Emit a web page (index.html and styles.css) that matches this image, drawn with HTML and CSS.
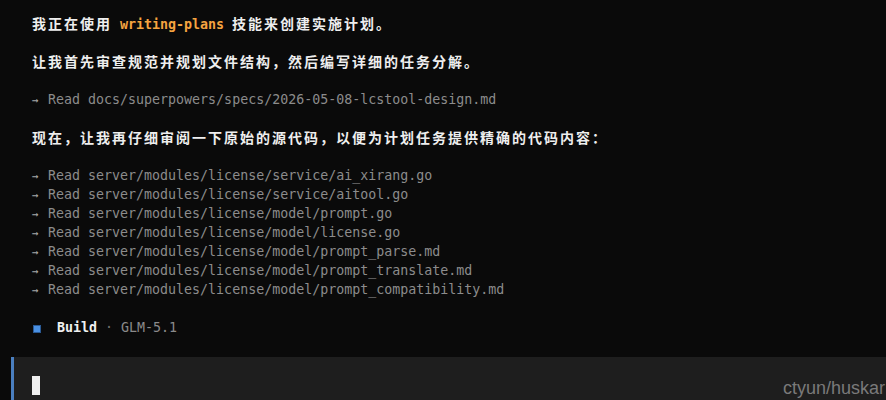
FILE: index.html
```html
<!DOCTYPE html>
<html lang="zh">
<head>
<meta charset="utf-8">
<title>Terminal</title>
<link rel="stylesheet" href="styles.css">
</head>
<body>
<div class="screen">
  <div class="log">
    <div class="line msg"><span class="cjk">我正在使用</span> <span class="hl">writing-plans</span> <span class="cjk">技能来创建实施计划。</span></div>
    <div class="line blank"></div>
    <div class="line msg"><span class="cjk">让我首先审查规范并规划文件结构，然后编写详细的任务分解。</span></div>
    <div class="line blank"></div>
    <div class="line tool"><span class="arrow">→</span> Read docs/superpowers/specs/2026-05-08-lcstool-design.md</div>
    <div class="line blank"></div>
    <div class="line msg"><span class="cjk">现在，让我再仔细审阅一下原始的源代码，以便为计划任务提供精确的代码内容：</span></div>
    <div class="line blank"></div>
    <div class="line tool"><span class="arrow">→</span> Read server/modules/license/service/ai_xirang.go</div>
    <div class="line tool"><span class="arrow">→</span> Read server/modules/license/service/aitool.go</div>
    <div class="line tool"><span class="arrow">→</span> Read server/modules/license/model/prompt.go</div>
    <div class="line tool"><span class="arrow">→</span> Read server/modules/license/model/license.go</div>
    <div class="line tool"><span class="arrow">→</span> Read server/modules/license/model/prompt_parse.md</div>
    <div class="line tool"><span class="arrow">→</span> Read server/modules/license/model/prompt_translate.md</div>
    <div class="line tool"><span class="arrow">→</span> Read server/modules/license/model/prompt_compatibility.md</div>
    <div class="line blank"></div>
    <div class="line status"><span class="square"></span><span class="mode">Build</span><span class="dot"> · </span><span class="model">GLM-5.1</span></div>
  </div>
  <div class="input">
    <span class="cursor"></span>
  </div>
  <div class="watermark">ctyun/huskar</div>
</div>
</body>
</html>
```

FILE: styles.css
```css
* { box-sizing: border-box; }
html, body {
  margin: 0;
  padding: 0;
  background: #0a0a0a;
  height: 100%;
  overflow: hidden;
}
.screen {
  position: relative;
  height: 400px;
  font-family: "DejaVu Sans Mono", "Noto Sans CJK SC", monospace;
  font-size: 13.3px;
  color: #8c8c8c;
}
.log {
  padding: 14px 0 0 32px;
}
.line {
  height: 19px;
  line-height: 19px;
  white-space: pre;
}
.msg {
  color: #eeeeee;
  font-weight: bold;
}
.cjk {
  font-family: "Noto Sans CJK SC", sans-serif;
  font-size: 14px;
  letter-spacing: 2px;
  font-weight: bold;
}
.hl {
  color: #f5a440;
  font-weight: bold;
}
.tool {
  color: #8c8c8c;
}
.arrow {
  display: inline-block;
  width: 8px;
  font-size: 11px;
  color: #a8a8a8;
  text-align: left;
}
.status {
  display: flex;
  align-items: center;
}
.square {
  width: 8px;
  height: 8px;
  background: #4a90e2;
  border: 1px solid #2a5a95;
  margin: 2px 16px 0 1px;
}
.mode {
  color: #f0f0f0;
  font-weight: bold;
}
.dot {
  color: #707070;
}
.model {
  color: #8a8a8a;
}
.input {
  margin: 20px 0 0 11px;
  height: 60px;
  background: #1e1e1e;
  border-left: 3px solid #4a7fc0;
  padding: 19px 0 0 18px;
}
.cursor {
  display: block;
  width: 8px;
  height: 19px;
  background: #eeeeee;
}
.watermark {
  position: absolute;
  left: 783px;
  top: 378px;
  font-family: "Liberation Sans", Arial, sans-serif;
  font-size: 18px;
  color: #7a7a7a;
  white-space: nowrap;
}
```
